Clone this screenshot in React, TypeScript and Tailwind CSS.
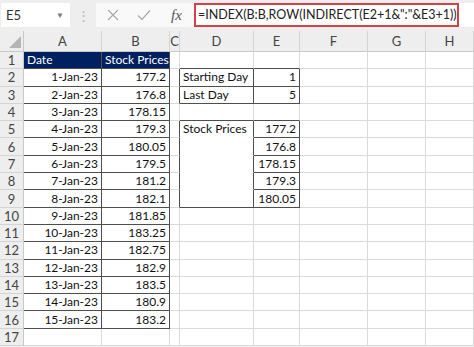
import React from "react";

type Cell = {
  t?: string;
  a?: "l" | "r";
  navy?: boolean;
  rd?: boolean;
  bd?: boolean;
  noB?: boolean;
};

const prices = ["177.2", "176.8", "178.15", "179.3", "180.05", "179.5", "181.2", "182.1", "181.85", "183.25", "182.75", "182.9", "183.5", "180.9", "183.2"];

function getCell(r: number, c: number): Cell {
  const cell: Cell = {};
  if (c === 1 || c === 2) {
    if (r === 1) {
      cell.navy = true;
      cell.t = c === 1 ? "Date" : "Stock Prices";
      cell.a = "l";
      cell.rd = true;
      cell.bd = true;
    } else if (r <= 16) {
      cell.t = c === 1 ? `${r - 1}-Jan-23` : prices[r - 2];
      cell.a = "r";
      cell.rd = true;
      cell.bd = true;
    }
  }
  if (c === 3 && ((r >= 2 && r <= 3) || (r >= 5 && r <= 9))) cell.rd = true;
  if (c === 4 || c === 5) {
    if (r === 1 || r === 4) cell.bd = true;
    if (r === 2 || r === 3) {
      cell.rd = true;
      cell.bd = true;
      if (c === 4) {
        cell.t = r === 2 ? "Starting Day" : "Last Day";
        cell.a = "l";
      } else {
        cell.t = r === 2 ? "1" : "5";
        cell.a = "r";
      }
    }
    if (r >= 5 && r <= 9) {
      cell.rd = true;
      if (c === 4) {
        if (r === 5) {
          cell.t = "Stock Prices";
          cell.a = "l";
        }
        if (r < 9) cell.noB = true;
        else cell.bd = true;
      } else {
        cell.bd = true;
        cell.t = prices[r - 5];
        cell.a = "r";
      }
    }
  }
  return cell;
}

const COLS = ["A", "B", "C", "D", "E", "F", "G", "H"];

function GridCell({ cell }: { cell: Cell }) {
  const cls = [
    "flex items-center overflow-hidden whitespace-nowrap border-r border-b min-h-0",
    cell.rd ? "border-r-[#4d4d4d]" : "border-r-[#dadada]",
    cell.noB ? "border-b-white" : cell.bd ? "border-b-[#4d4d4d]" : "border-b-[#dadada]",
    cell.navy ? "bg-[#002060] text-white" : "bg-white text-[#111]",
    cell.a === "r" ? "justify-end pr-[3px]" : "justify-start pl-[3px]",
  ].join(" ");
  return <div className={cls}>{cell.t ?? ""}</div>;
}

export default function App() {
  const rows = Array.from({ length: 17 }, (_, i) => i + 1);
  return (
    <div
      className="w-[474px] h-[347px] overflow-hidden bg-[#eeeeee] text-[12px] leading-[14px]"
      style={{ fontFamily: "Lato, 'Open Sans', sans-serif" }}
    >
      {/* Formula bar */}
      <div className="h-[31px] flex items-start pt-[3px]">
        <div className="ml-[1px] w-[69px] h-[24px] bg-white flex items-center justify-between pl-[5px] pr-[6px]">
          <span className="text-[13px] text-[#333]">E5</span>
          <span className="text-[8px] text-[#777]">▼</span>
        </div>
        <div className="w-[26px] h-[24px] flex items-center justify-center text-[#b8b8b8] text-[13px]">⋮</div>
        <div className="w-[98px] h-[24px] bg-[#f9f9f9] flex items-center">
          <svg width="12" height="12" viewBox="0 0 12 12" className="ml-[11px]">
            <path d="M1 1 L11 11 M11 1 L1 11" stroke="#a8a8a8" strokeWidth="1.1" fill="none" />
          </svg>
          <svg width="14" height="12" viewBox="0 0 14 12" className="ml-[18px]">
            <path d="M1 6.5 L5 10.5 L13 1.5" stroke="#a8a8a8" strokeWidth="1.2" fill="none" />
          </svg>
          <span
            className="ml-[20px] text-[15px] italic text-[#555]"
            style={{ fontFamily: "'Liberation Serif', serif" }}
          >
            fx
          </span>
        </div>
        <div className="w-[265px] h-[24px] bg-white border-2 border-[#d5404a] flex items-center pl-[2px] text-[12.5px] text-[#222] whitespace-nowrap overflow-hidden">
          =INDEX(B:B,ROW(INDIRECT(E2+1&amp;":"&amp;E3+1)))
        </div>
        <div className="flex-1 h-[24px] bg-white" />
      </div>

      {/* Column headers */}
      <div className="grid grid-cols-[24px_78px_68px_10px_74px_46px_68px_58px_48px] grid-rows-[21px] h-[21px] bg-[#eeeeee]">
        <div className="relative border-r border-b border-[#c8c8c8]">
          <svg width="12" height="12" viewBox="0 0 12 12" className="absolute right-[2px] bottom-[3px]">
            <path d="M12 0 L12 12 L0 12 Z" fill="#b5b5b5" />
          </svg>
        </div>
        {COLS.map((c) => (
          <div key={c} className="flex items-center justify-center border-r border-b border-r-[#d4d4d4] border-b-[#c8c8c8] text-[13px] text-[#444]">
            {c}
          </div>
        ))}
      </div>

      {/* Rows */}
      {rows.map((r) => (
        <div key={r} className="grid grid-cols-[24px_78px_68px_10px_74px_46px_68px_58px_48px] grid-rows-[17.3px] h-[17.3px]">
          <div className="flex items-center justify-center bg-[#eeeeee] border-r border-b border-r-[#c8c8c8] border-b-[#d4d4d4] text-[13px] text-[#444]">
            {r}
          </div>
          {COLS.map((_, ci) => (
            <GridCell key={ci} cell={getCell(r, ci + 1)} />
          ))}
        </div>
      ))}
    </div>
  );
}
